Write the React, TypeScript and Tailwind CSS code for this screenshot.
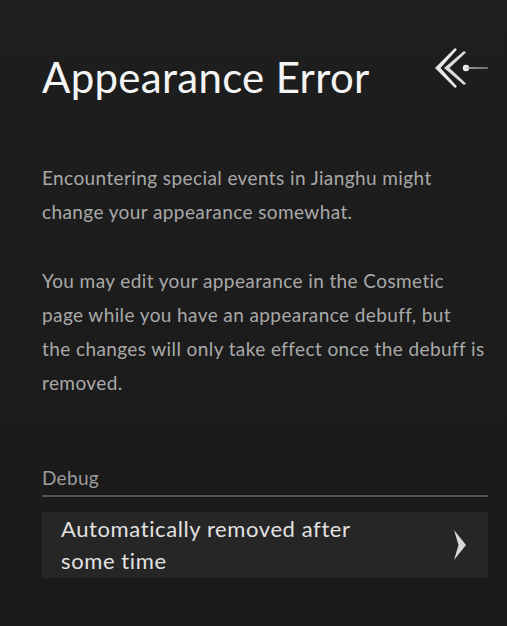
import { ReactNode } from 'react'

function BackIcon() {
  return (
    <svg width="56" height="44" viewBox="0 0 56 44" fill="none">
      <path d="M22 2 L24 3.5 L7.5 22 L24 40.5 L22 42 L2 22 Z" fill="#e8e8e8" />
      <path d="M31 5 L33 6.5 L16.5 22 L33 37.5 L31 39 L11 22 Z" fill="#dcdcdc" />
      <circle cx="33" cy="22" r="3.2" fill="#ececec" />
      <path d="M33 21.2 L55 21.6 L55 22.4 L33 22.8 Z" fill="#bdbdbd" />
    </svg>
  )
}

function Paragraph({ children }: { children: ReactNode }) {
  return (
    <p className="text-[19px] leading-[34px] text-[#a9a9a9] tracking-[0.4px]">
      {children}
    </p>
  )
}

export default function App() {
  return (
    <div
      className="w-[507px] h-[626px] bg-gradient-to-b from-[#1e1e1e] to-[#1a1a1a] overflow-hidden"
      style={{ fontFamily: 'Lato, "Noto Sans", sans-serif' }}
    >
      <div className="pl-[42px] pr-[19px] pt-[52px]">
        <div className="flex items-start justify-between">
          <h1 className="text-[42px] leading-[50px] text-[#f4f4f4] font-normal tracking-[0.3px]">
            Appearance Error
          </h1>
          <div className="mt-[-6px] mr-[-1px]">
            <BackIcon />
          </div>
        </div>

        <div className="mt-[59px] flex flex-col gap-[35px]">
          <Paragraph>
            Encountering special events in Jianghu might
            <br />
            change your appearance somewhat.
          </Paragraph>
          <Paragraph>
            You may edit your appearance in the Cosmetic
            <br />
            page while you have an appearance debuff, but
            <br />
            the changes will only take effect once the debuff is
            <br />
            removed.
          </Paragraph>
        </div>

        <div className="mt-[66px]">
          <div className="text-[19px] leading-[24px] text-[#9d9d9d] tracking-[0.3px] pb-[5px] border-b-2 border-[#555555]">
            Debug
          </div>
          <button className="mt-[15px] w-full h-[66px] bg-[#262626] flex items-center justify-between pl-[19px] pr-[21px] text-left">
            <span className="text-[22px] leading-[32px] text-[#e2e2e2] tracking-[0.6px]">
              Automatically removed after
              <br />
              some time
            </span>
            <svg width="14" height="32" viewBox="0 0 14 32">
              <path d="M1 1 L13 16 L1 31 L5.5 16 Z" fill="#d8d8d8" />
            </svg>
          </button>
        </div>
      </div>
    </div>
  )
}
